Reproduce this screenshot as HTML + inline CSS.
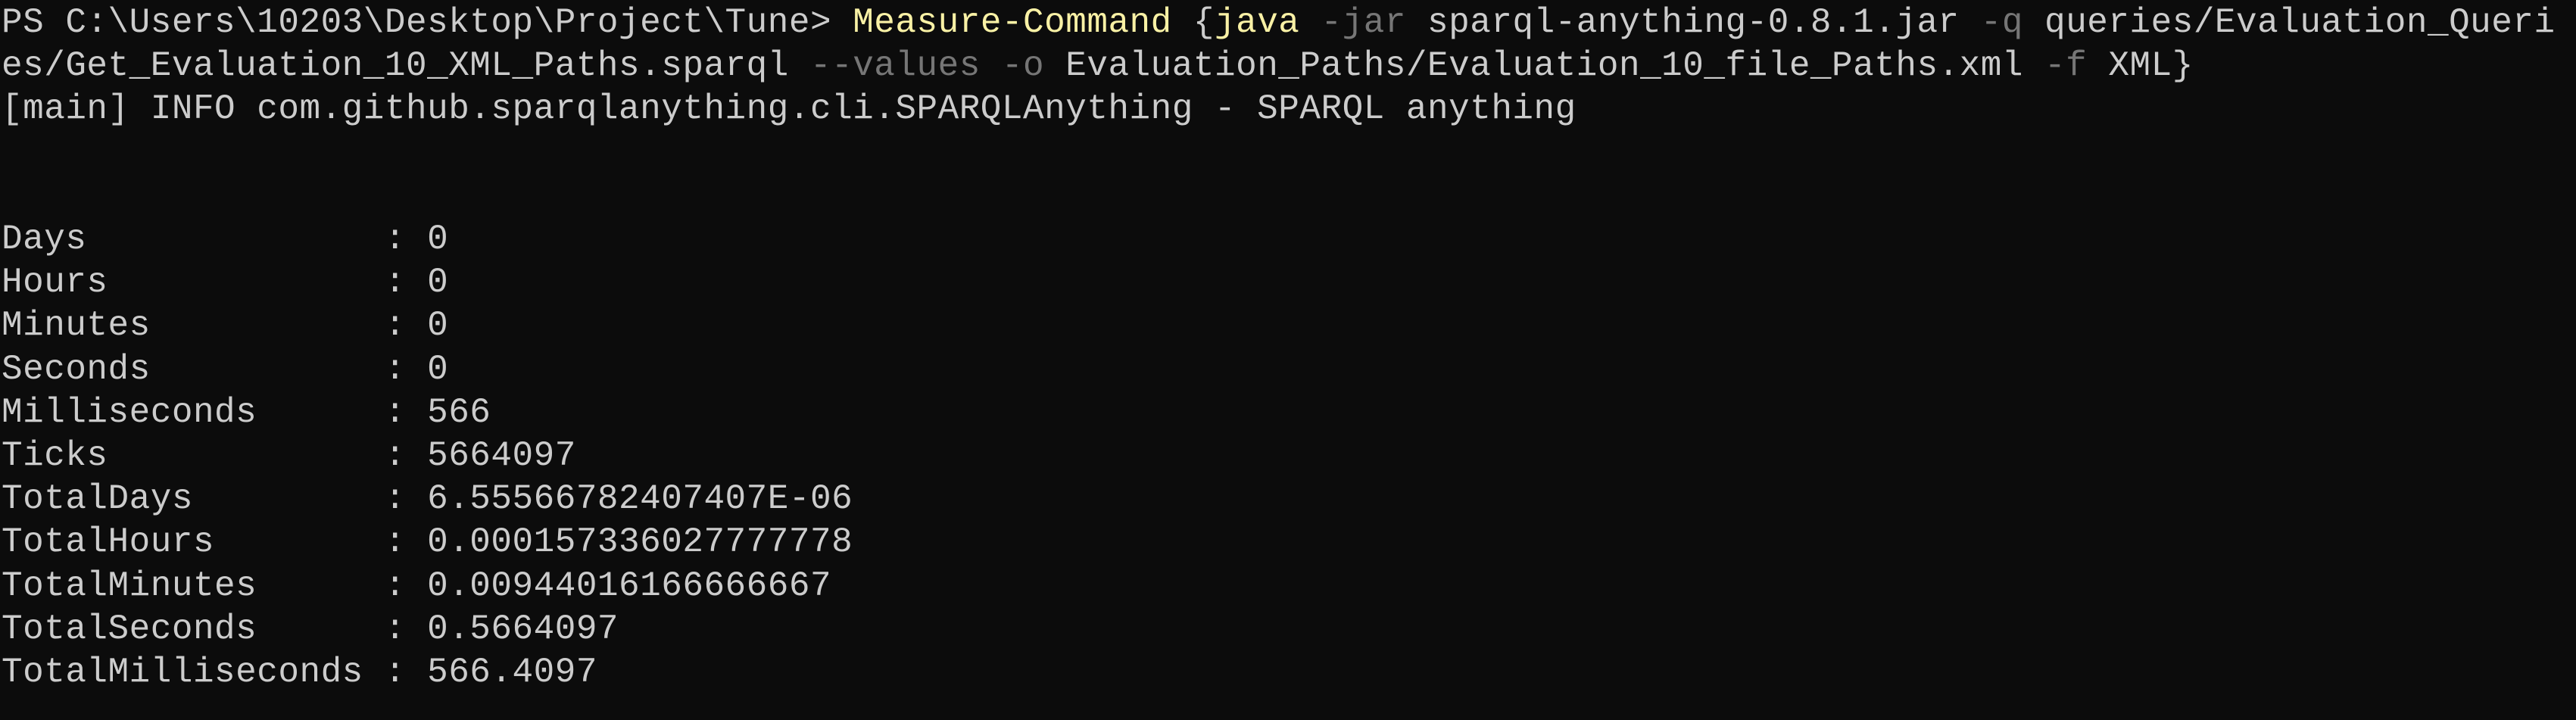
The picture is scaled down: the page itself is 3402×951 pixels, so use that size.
<!DOCTYPE html>
<html><head><meta charset="utf-8"><style>
html,body{margin:0;padding:0;background:#0c0c0c;width:3402px;height:951px;overflow:hidden}
pre{margin:0;position:absolute;left:2px;top:2px;font-family:"Liberation Mono","DejaVu Sans Mono",monospace;font-size:46px;letter-spacing:0.5px;line-height:57.2px;color:#cccccc;white-space:pre}
.y{color:#f9f1a5}.g{color:#767676}
</style></head><body><pre>PS C:\Users\10203\Desktop\Project\Tune&gt; <span class="y">Measure-Command</span> {<span class="y">java</span> <span class="g">-jar</span> sparql-anything-0.8.1.jar <span class="g">-q</span> queries/Evaluation_Queri
es/Get_Evaluation_10_XML_Paths.sparql <span class="g">--values</span> <span class="g">-o</span> Evaluation_Paths/Evaluation_10_file_Paths.xml <span class="g">-f</span> XML}
[main] INFO com.github.sparqlanything.cli.SPARQLAnything - SPARQL anything


Days              : 0
Hours             : 0
Minutes           : 0
Seconds           : 0
Milliseconds      : 566
Ticks             : 5664097
TotalDays         : 6.55566782407407E-06
TotalHours        : 0.000157336027777778
TotalMinutes      : 0.00944016166666667
TotalSeconds      : 0.5664097
TotalMilliseconds : 566.4097</pre></body></html>
